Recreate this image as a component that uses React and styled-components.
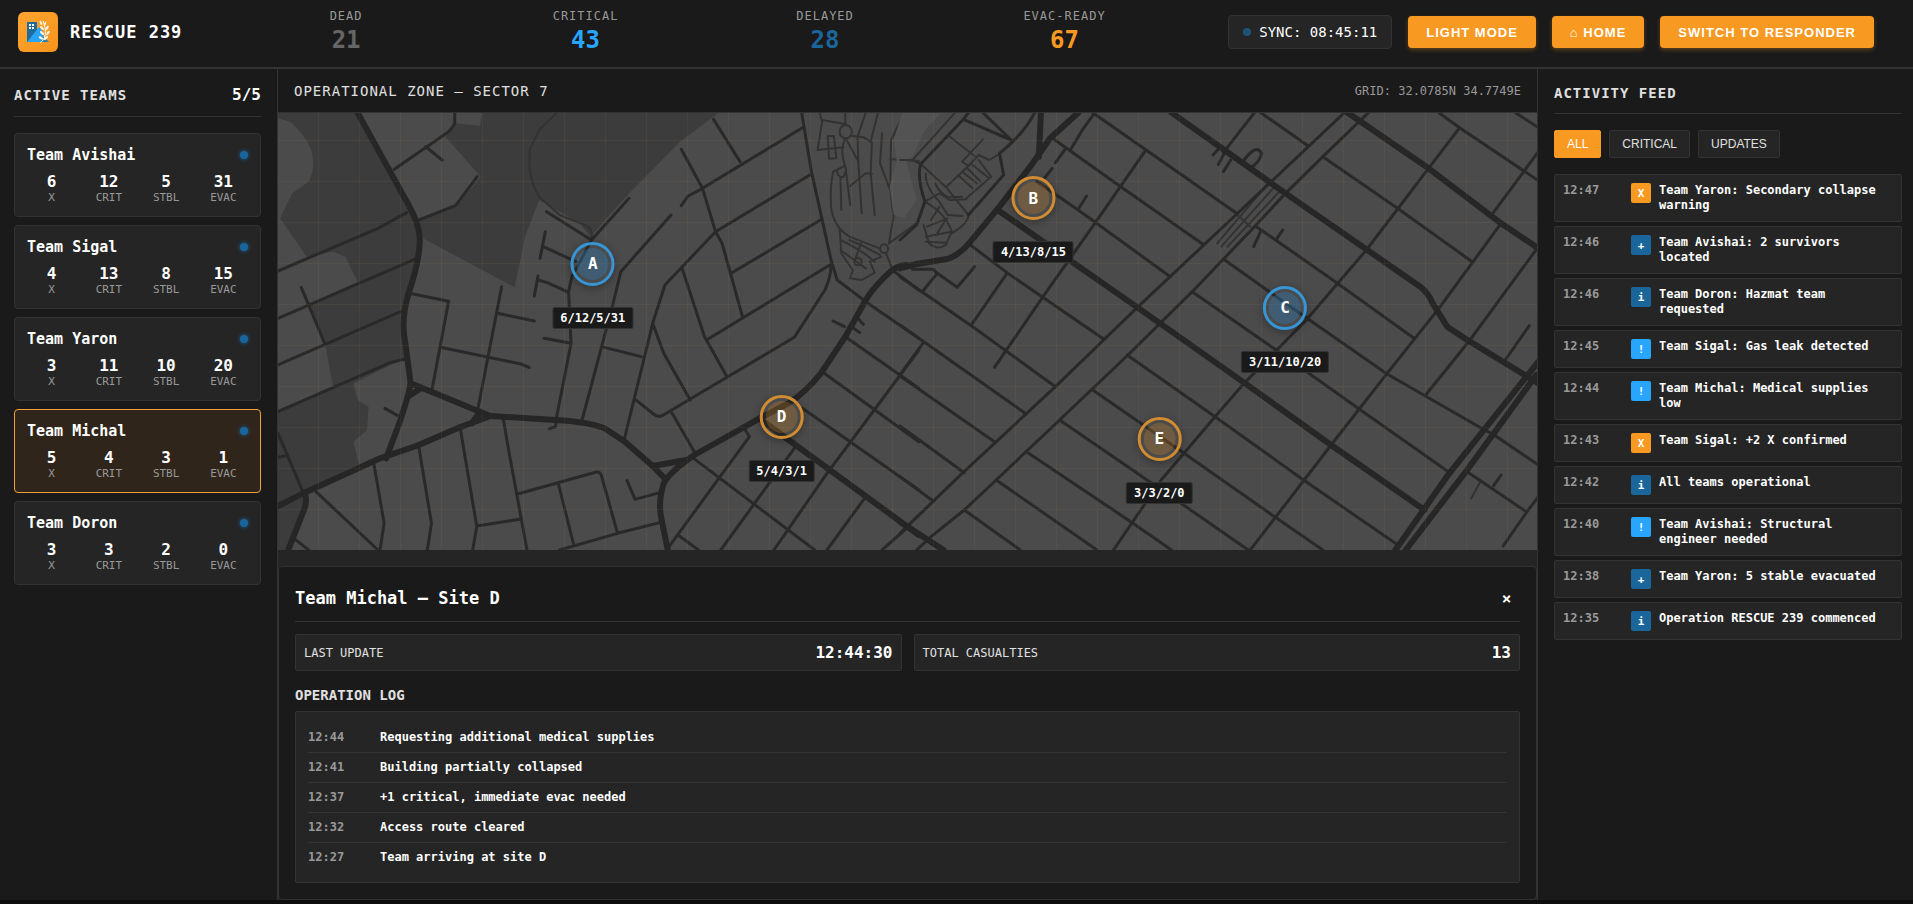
import React, { useState } from "react";
import styled, { createGlobalStyle, css } from "styled-components";

const c = {
  page: "#0d0d0d",
  panel: "#1a1a1a",
  card: "#252525",
  line: "#333333",
  text: "#ffffff",
  soft: "#e0e0e0",
  muted: "#999999",
  orange: "#f89921",
  blue: "#28a5fd",
  deep: "#1a6599",
};

const mono = '"DejaVu Sans Mono", "Liberation Mono", monospace';
const sans = '"Liberation Sans", Arial, sans-serif';

const GlobalStyle = createGlobalStyle`
  * { box-sizing: border-box; }
  body {
    margin: 0;
    background: ${c.page};
    color: ${c.text};
    font-family: ${mono};
  }
  h1, h2, h3, p, ul, ol, dl, dd { margin: 0; padding: 0; }
  ul, ol { list-style: none; }
`;

const Page = styled.div`
  display: flex;
  flex-direction: column;
  min-height: calc(100vh - 4px);
  background: ${c.panel};
`;

/* ---------- header ---------- */

const Header = styled.header`
  display: flex;
  align-items: center;
  height: 69px;
  padding: 0 39px 3px 18px;
  border-bottom: 2px solid ${c.line};
`;

const Brand = styled.div`
  display: flex;
  align-items: center;
  gap: 12px;
`;

const Logo = styled.div`
  display: grid;
  place-items: center;
  width: 40px;
  height: 40px;
  border-radius: 6px;
  background: linear-gradient(135deg, #ffa530, #f6931c);
`;

const Title = styled.h1`
  font-size: 17px;
  line-height: 20px;
  letter-spacing: 1px;
  white-space: nowrap;
`;

const Totals = styled.dl`
  flex: 1;
  display: grid;
  grid-template-columns: repeat(4, 1fr);
  margin: 0 44px;
  text-align: center;
`;

const TotalLabel = styled.dt`
  color: ${c.muted};
  font-size: 12px;
  line-height: 16px;
  letter-spacing: 1px;
`;

const TotalValue = styled.dd`
  color: ${(p) => p.$color};
  font-size: 24px;
  font-weight: 700;
  line-height: 32px;
`;

const Actions = styled.div`
  display: flex;
  align-items: center;
  gap: 16px;
`;

const Sync = styled.div`
  display: flex;
  align-items: center;
  gap: 8px;
  height: 34px;
  padding: 0 14px;
  border: 1px solid ${c.line};
  border-radius: 4px;
  background: ${c.card};
  font-size: 14px;
  white-space: nowrap;
`;

const Dot = styled.span`
  width: 8px;
  height: 8px;
  border-radius: 50%;
  background: ${c.deep};
  ${(p) => (p.$dim ? "opacity: 0.7;" : `box-shadow: 0 0 4px ${c.deep};`)}
`;

const ActionButton = styled.button`
  height: 32px;
  padding: 0 18px;
  border: 0;
  border-radius: 4px;
  background: ${c.orange};
  box-shadow: 0 2px 4px rgba(248, 153, 33, 0.3);
  color: ${c.text};
  font: 700 13px ${sans};
  letter-spacing: 1px;
  white-space: nowrap;
  cursor: pointer;
`;

/* ---------- columns ---------- */

const Columns = styled.main`
  flex: 1;
  display: grid;
  grid-template-columns: 278px minmax(0, 1fr) 376px;
`;

const TeamsPanel = styled.aside`
  padding: 16px 16px 16px 14px;
  border-right: 1px solid ${c.line};
`;

const PanelHead = styled.div`
  display: flex;
  align-items: center;
  justify-content: space-between;
  padding-bottom: ${(p) => (p.$compact ? 12 : 11)}px;
  margin-bottom: 16px;
  border-bottom: 1px solid ${c.line};
`;

const PanelTitle = styled.h2`
  color: ${c.soft};
  font-size: 14px;
  line-height: 16px;
  letter-spacing: 1px;
`;

const TeamCount = styled.span`
  font-size: 16px;
  font-weight: 700;
  line-height: 20px;
`;

const TeamList = styled.ul`
  display: flex;
  flex-direction: column;
  gap: 8px;
`;

const TeamCard = styled.button`
  display: block;
  width: 100%;
  padding: 12px;
  border: 1px solid ${(p) => (p.$active ? "#f0a040" : c.line)};
  border-radius: 4px;
  background: ${(p) => (p.$active ? "#30251b" : c.card)};
  color: ${c.text};
  font-family: ${mono};
  text-align: left;
  cursor: pointer;
`;

const TeamTop = styled.span`
  display: flex;
  align-items: center;
  justify-content: space-between;
  margin-bottom: 8px;
  font-size: 15px;
  font-weight: 700;
  line-height: 18px;
`;

const TeamStats = styled.span`
  display: grid;
  grid-template-columns: repeat(4, 1fr);
  gap: 8px;
  text-align: center;
`;

const TeamStat = styled.span`
  display: flex;
  flex-direction: column;
`;

const StatNumber = styled.span`
  font-size: 16px;
  font-weight: 700;
  line-height: 20px;
`;

const StatLabel = styled.span`
  color: ${c.muted};
  font-size: 11px;
  line-height: 12px;
`;

/* ---------- map ---------- */

const Centre = styled.section`
  display: flex;
  flex-direction: column;
  background: ${c.card};
`;

const ZoneHead = styled.div`
  display: flex;
  align-items: center;
  justify-content: space-between;
  height: 44px;
  padding: 0 16px;
  border-bottom: 1px solid ${c.line};
  background: ${c.panel};
`;

const ZoneTitle = styled.h2`
  color: ${c.soft};
  font-size: 14px;
  font-weight: 400;
  letter-spacing: 1px;
`;

const Coordinates = styled.span`
  color: ${c.muted};
  font-size: 12px;
`;

const MapArea = styled.div`
  position: relative;
  flex: 1;
  min-height: 400px;
  margin-bottom: 16px;
  overflow: hidden;
  background: #4b4b4b;

  > svg {
    position: absolute;
    inset: 0;
    width: 100%;
    height: 100%;
  }

  &::after {
    content: "";
    position: absolute;
    inset: 0;
    background-image:
      repeating-linear-gradient(0deg, transparent 0 40px, rgba(248, 190, 120, 0.05) 40px 41px),
      repeating-linear-gradient(90deg, transparent 0 40px, rgba(248, 190, 120, 0.05) 40px 41px);
    pointer-events: none;
  }
`;

const Site = styled.div`
  position: absolute;
  z-index: 1;
  left: ${(p) => p.$x}%;
  top: ${(p) => p.$y}%;
  display: flex;
  flex-direction: column;
  align-items: center;
  gap: 21px;
  transform: translate(-50%, -24px);
`;

const SiteRing = styled.button`
  width: 44px;
  height: 44px;
  padding: 3px;
  border: 3px solid ${(p) => (p.$blue ? "#3695d6" : "#d18c31")};
  border-radius: 50%;
  background-color: ${(p) => (p.$blue ? "rgba(40, 140, 210, 0.12)" : "rgba(248, 153, 33, 0.06)")};
  background-image: linear-gradient(
    ${(p) => (p.$blue ? "rgba(40, 130, 200, 0.22), rgba(40, 130, 200, 0.22)" : "rgba(248, 153, 33, 0.16), rgba(248, 153, 33, 0.16)")}
  );
  background-clip: content-box, padding-box;
  background-origin: content-box;
  box-shadow: 0 2px 8px rgba(0, 0, 0, 0.35);
  color: ${c.text};
  font: 700 16px ${mono};
  cursor: pointer;
`;

const SiteLabel = styled.span`
  padding: 0 7px;
  border: 1px solid ${c.line};
  border-radius: 2px;
  background: ${c.panel};
  font-size: 12px;
  font-weight: 700;
  line-height: 20px;
  white-space: nowrap;
`;

/* ---------- team detail ---------- */

const Detail = styled.section`
  padding: 16px;
  border: 1px solid ${c.line};
  border-radius: 4px;
  background: ${c.panel};
`;

const DetailHead = styled.div`
  display: flex;
  align-items: center;
  justify-content: space-between;
  padding-bottom: 8px;
  margin-bottom: 12px;
  border-bottom: 1px solid ${c.line};
`;

const DetailTitle = styled.h2`
  font-size: 17px;
  line-height: 30px;
`;

const CloseButton = styled.button`
  width: 27px;
  height: 30px;
  padding: 0;
  border: 0;
  background: none;
  color: ${c.text};
  font: 700 16px ${mono};
  cursor: pointer;
`;

const Facts = styled.dl`
  display: grid;
  grid-template-columns: 1fr 1fr;
  gap: 12px;
  margin-bottom: 16px;
`;

const Fact = styled.div`
  display: flex;
  align-items: center;
  justify-content: space-between;
  height: 37px;
  padding: 0 8px;
  border: 1px solid ${c.line};
  border-radius: 2px;
  background: ${c.card};

  dt { color: ${c.soft}; font-size: 12px; }
  dd { font-size: 16px; font-weight: 700; }
`;

const LogTitle = styled.h3`
  margin-bottom: 8px;
  color: ${c.soft};
  font-size: 14px;
  line-height: 16px;
`;

const Log = styled.ol`
  padding: 11px 12px 9px;
  border: 1px solid ${c.line};
  border-radius: 2px;
  background: ${c.card};
`;

const LogRow = styled.li`
  display: grid;
  grid-template-columns: 60px 1fr;
  gap: 12px;
  height: 30px;
  border-bottom: 1px solid ${c.line};
  font-size: 12px;
  font-weight: 700;
  line-height: 29px;

  &:last-child { border-bottom: 0; }
`;

const Time = styled.time`
  color: ${c.muted};
  font-weight: 700;
`;

/* ---------- activity feed ---------- */

const FeedPanel = styled.aside`
  padding: 16px 11px 16px 16px;
  border-left: 1px solid ${c.line};
`;

const Filters = styled.div`
  display: flex;
  gap: 8px;
  margin-bottom: 16px;
`;

const FilterButton = styled.button`
  height: 28px;
  padding: 0 12px;
  border: 1px solid ${c.line};
  border-radius: 2px;
  background: ${c.card};
  color: ${c.soft};
  font: 400 12px ${sans};
  cursor: pointer;
  ${(p) =>
    p.$active &&
    css`
      border-color: ${c.orange};
      background: ${c.orange};
      color: ${c.text};
    `}
`;

const FeedList = styled.ul`
  display: flex;
  flex-direction: column;
  gap: 4px;
`;

const FeedItem = styled.li`
  display: grid;
  grid-template-columns: 60px 20px 1fr;
  gap: 8px;
  padding: 8px;
  border: 1px solid ${c.line};
  border-radius: 2px;
  background: ${c.card};
  font-size: 12px;
  font-weight: 700;
  line-height: 15px;
`;

const Badge = styled.span`
  width: 20px;
  height: 20px;
  border-radius: 2px;
  background: ${(p) => p.$color};
  font-size: 11px;
  line-height: 21px;
  text-align: center;
`;

/* ---------- data ---------- */

const totals = [
  ["DEAD", 21, "#666666"],
  ["CRITICAL", 43, c.blue],
  ["DELAYED", 28, c.deep],
  ["EVAC-READY", 67, c.orange],
];

const teams = [
  ["Team Avishai", [6, 12, 5, 31]],
  ["Team Sigal", [4, 13, 8, 15]],
  ["Team Yaron", [3, 11, 10, 20]],
  ["Team Michal", [5, 4, 3, 1]],
  ["Team Doron", [3, 3, 2, 0]],
];

const statNames = ["X", "CRIT", "STBL", "EVAC"];

const sites = [
  ["A", 25, 35, "6/12/5/31", true],
  ["B", 60, 20, "4/13/8/15", false],
  ["C", 80, 45, "3/11/10/20", true],
  ["D", 40, 70, "5/4/3/1", false],
  ["E", 70, 75, "3/3/2/0", false],
];

const log = [
  ["12:44", "Requesting additional medical supplies"],
  ["12:41", "Building partially collapsed"],
  ["12:37", "+1 critical, immediate evac needed"],
  ["12:32", "Access route cleared"],
  ["12:27", "Team arriving at site D"],
];

const badgeColors = { X: c.orange, "+": c.deep, i: c.deep, "!": c.blue };

const feed = [
  ["12:47", "X", "Team Yaron: Secondary collapse warning"],
  ["12:46", "+", "Team Avishai: 2 survivors located"],
  ["12:46", "i", "Team Doron: Hazmat team requested"],
  ["12:45", "!", "Team Sigal: Gas leak detected"],
  ["12:44", "!", "Team Michal: Medical supplies low"],
  ["12:43", "X", "Team Sigal: +2 X confirmed"],
  ["12:42", "i", "All teams operational"],
  ["12:40", "!", "Team Avishai: Structural engineer needed"],
  ["12:38", "+", "Team Yaron: 5 stable evacuated"],
  ["12:35", "i", "Operation RESCUE 239 commenced"],
];

const west = {
  dark: [
    "M0,158 L195,158 L340,470 L350,535 L340,600 L305,750 L310,895 L185,970 L195,1020 L222,1040 L218,1110 L185,1145 L198,1212 L62,1295 L70,1330 L25,1470 L0,1470 L0,1050 L135,980 L115,850 L75,735 L195,665 L165,590 L135,575 L70,590 L5,475 L35,400 L75,365 Q90,330 85,290 Q80,240 30,185 L0,175Z",
    "M500,158 L1080,158 L985,245 L860,400 L765,530 L740,490 L640,420 L605,530 L580,682 L355,535 L345,480 L435,440 L497,350 L410,230 L435,190 L495,197Z",
  ],
  major: [
    "M195,158 L250,280 L320,435 Q350,500 347,550 Q345,610 320,700 Q300,780 312,850 L325,970 L318,1010 L300,1080 L265,1195",
    "M0,1338 L65,1298 L250,1195 L345,1155 L445,1102 L520,1068",
    "M325,970 L520,1068 L680,1080 Q760,1085 800,1105 L850,1145 L918,1218 L1000,1200",
    "M1540,615 Q1520,615 1500,635 Q1460,680 1440,720 L1390,830 L1330,940 Q1290,1000 1250,1030 L1180,1075 L1020,1185 Q960,1235 945,1270 Q930,1330 940,1380 L955,1470",
    "M918,1218 L950,1258 M350,985 L318,1010 M495,1055 L475,1090 M65,1298 Q72,1320 65,1345 L25,1470",
    "M1190,1085 L1570,1425",
  ],
  minor: [
    "M433,158 L433,190 Q425,210 410,222 L285,328 M362,260 L402,300 M345,480 L435,437 L488,350",
    "M0,633 L245,505 L315,458 M0,775 L340,595 M0,915 L300,755 M0,1055 L275,908 L310,898 M57,682 L115,852",
    "M322,700 L418,724 L378,985 M398,862 L595,912 L615,922 M548,680 L490,1045 M538,760 L628,783",
    "M658,455 L768,540 L860,415 M768,540 L720,650 L712,695 L718,850 L682,1075 L680,1100 L665,1106 M655,515 L642,595 M650,560 L730,605 M637,648 L628,708 M637,660 L660,668 L712,697 M652,835 L718,850",
    "M963,465 L840,635 L820,735 L745,1080 M792,860 L890,890",
    "M1067,178 L1132,305 M988,268 L1040,385 L1072,515 L1088,550 L1138,770 M988,437 L1005,408 L1040,385",
    "M1285,203 L1040,385 M1307,342 L1072,515 L948,675 L918,790 L848,1140 M1332,478 L1110,640 M1355,613 L1050,840 M990,625 L1045,830 L1100,950 M1283,158 L1307,335 L1355,600 L1370,660 L1440,725 L1570,835",
    "M1355,615 Q1355,650 1340,690 L1265,832 L940,1068 Q930,1072 920,1062 L875,1018 M918,790 L945,880 L1010,1020 M965,1058 L1020,1175",
    "M1507,632 L1570,690 M1390,830 L1570,985 M1335,937 L1570,1145 M1285,1045 L1570,1290 M1570,870 L1400,1150 L1345,1240 L1215,1470 M1440,1310 L1345,1470 M1540,1405 L1480,1470 M1268,1160 L1085,1470",
    "M1015,1192 L1315,1470 M1145,1110 L1155,1130 L1080,1255 L955,1465 M980,1425 L1030,1470",
    "M93,1295 L245,1470 M235,1212 L260,1390 L250,1470 M345,1160 L376,1390 L366,1470 M447,1108 L487,1400 L477,1470 M552,1078 L568,1190 L610,1470 M487,1398 L592,1378",
    "M587,1302 L780,1236 Q788,1234 792,1245 L832,1420 M687,1272 L724,1452 M690,1470 L832,1420 L935,1388 M855,1262 L875,1318 L935,1298",
    "M0,1120 L62,1298 M0,1192 L20,1187 M262,1045 L292,1066 M42,1438 L75,1470 M1360,783 L1388,800 M1405,800 L1425,818 M1420,775 L1434,793",
  ],
  lane: [
    "M683,158 L640,210 L618,265 Q608,350 640,410 L690,465 L755,497 Q772,510 768,530",
    "M1327,158 L1333,185 L1322,270 L1385,262 M1333,180 L1390,192 L1390,158 M1347,228 L1362,228 L1368,295 L1350,296 Z",
    "M1376,215 a15,20 0 1,0 30,0 a15,20 0 1,0 -30,0 M1390,235 Q1375,270 1390,320 L1402,435 M1406,228 L1435,232 L1455,248 L1452,340 L1462,465 M1470,158 L1452,245 M1440,158 L1420,230 L1422,310 L1430,460 M1420,300 L1392,238 M1535,158 L1502,240 L1500,385 L1508,470 L1497,550 M1480,220 L1475,310 L1498,385",
    "M1388,318 L1360,335 Q1352,380 1355,440 Q1360,500 1400,530 L1475,566 M1370,330 Q1368,350 1385,352 L1392,330 M1378,352 L1380,450 M1402,378 L1440,340 L1455,342",
    "M1475,566 a10,13 0 1,0 20,0 a10,13 0 1,0 -20,0 M1497,550 L1570,485 M1490,580 L1505,628",
    "M1376,505 L1380,580 L1408,630 L1402,655 L1430,660 L1462,638 L1450,605 L1478,590 M1378,540 Q1430,570 1462,605 M1378,570 L1440,625 M1428,550 L1412,605 M1412,605 a9,11 0 1,0 18,0 a9,11 0 1,0 -18,0 M1400,540 Q1440,560 1475,585 M1500,297 L1570,303",
  ],
};

const east = {
  light: ["M5,158 L100,158 L60,210 L30,290 L15,300 L40,420 L10,475 L-15,465 L-25,380 L-8,300 L-15,240Z"],
  major: [
    "M340,158 L335,290 M430,158 L362,235 L320,310 L240,440 L170,545 Q140,590 110,598 L40,612 L0,625",
    "M655,158 L930,400 L1255,680 Q1275,700 1285,730 L1320,800 L1375,845 L1540,970",
    "M1080,158 L1275,325 L1450,490 L1540,565",
    "M238,452 L570,740 L830,968 L1040,1155 L1265,1350",
    "M0,1385 L105,1470",
    "M1540,905 L1508,955 L1325,1240 L1195,1470 M1535,945 L1365,1235 L1220,1470",
  ],
  minor: [
    "M470,158 L440,210 L412,268 M397,270 L375,308 M367,325 L345,360 M450,408 L430,448",
    "M368,235 L530,378 L730,552 M592,272 L470,490 L345,710 L228,922 M465,158 L812,460 M330,365 L430,450 L652,650",
    "M855,158 L780,278 M870,158 L985,258 M1072,158 L810,465 L570,745 L375,980 L150,1240 L0,1420",
    "M1130,158 L1020,290 L930,400 L855,500 L705,695 L550,885 L385,1080 L232,1260 L155,1350 L75,1430 L40,1470",
    "M1300,158 L1350,203 L1540,362 M1485,158 L1540,203 M1350,203 L1275,325 L1125,570 L980,780 L830,970 L760,1070 L630,1260 L515,1470",
    "M1020,290 L1200,445 L1380,605 M1540,275 L1430,460 M1450,490 L1300,745 L1175,940 L1040,1155 L845,1470 M1540,560 L1375,840 L1268,1005",
    "M860,500 L1050,665 L1240,835 M780,597 L930,730 L1175,942 L1410,1110 L1430,1122 L1540,1215 M705,695 L905,868 L1105,1045 L1328,1240",
    "M548,885 L760,1070 L970,1257 L1195,1450 M465,990 L680,1175 L900,1367 L1020,1470 M385,1080 L655,1310 L840,1470 M305,1175 L560,1388 L655,1470 M232,1260 L475,1470 M155,1350 L290,1470",
    "M170,555 L258,638 L492,838 M258,640 L172,795 M0,650 L172,797 L375,980 M0,795 L300,1058 M55,850 L0,945 M0,948 L228,1145 M0,1098 L155,1238 M0,1250 L80,1323",
    "M1368,1235 L1512,1356 L1455,1458 M1512,1356 L1540,1310 M1450,1245 L1432,1277 M1518,797 L1460,900",
    "M770,265 L755,285 M782,280 L768,313 M798,300 L780,335 M923,510 L907,540 M870,515 L853,560",
    "M30,628 L80,628 L90,640 L138,682 L180,620 M90,640 L57,690 M830,300 Q860,250 872,280 Q870,300 852,318",
    "M153,178 L268,240 M200,158 L268,240 M153,178 L50,312 Q40,350 60,425 L40,495 L0,540 M325,158 Q300,220 240,280 L250,345 L165,465 M165,158 L153,178",
  ],
  lane: [
    "M133,158 L30,300 L50,312 L110,380 L165,465 Q165,490 125,520 M60,425 Q110,460 125,515 L110,555 Q90,572 70,550 L57,495 M0,300 L30,300",
    "M118,228 L180,288 M200,238 L150,305 L165,318 L112,380 M165,318 L190,285 L215,300 L240,282 M190,300 L220,350 M140,345 L175,385 M150,335 L185,370 M162,325 L195,365 M175,315 L215,355 M220,350 L160,415",
    "M62,340 Q60,380 95,425 L115,465 L150,468 M60,425 L95,400 L120,420 L160,418 M85,370 Q95,400 118,412 L150,410 M65,500 L115,475 M62,530 L125,515 M75,480 L95,440 M90,520 L110,480 M62,545 L110,548",
    "M885,375 L765,550 M900,385 L775,560 M915,395 L790,560 M812,462 L845,500 M1400,1265 L1378,1315",
  ],
};

const Streets = styled.g`
  fill: none;
  stroke: ${(p) => p.$color};
  stroke-width: ${(p) => p.$w}px;
  stroke-linecap: round;
  stroke-linejoin: round;

  path { vector-effect: non-scaling-stroke; }
`;

function MapHalf({ data, transform }) {
  return (
    <g transform={transform}>
      {(data.dark || []).map((d) => <path key={d} d={d} fill="#3c3c3c" />)}
      {(data.light || []).map((d) => <path key={d} d={d} fill="#535353" />)}
      <Streets $w={2} $color="#323232">{data.lane.map((d) => <path key={d} d={d} />)}</Streets>
      <Streets $w={3} $color="#292929">{data.minor.map((d) => <path key={d} d={d} />)}</Streets>
      <Streets $w={6} $color="#262626">{data.major.map((d) => <path key={d} d={d} />)}</Streets>
    </g>
  );
}

function StreetMap() {
  return (
    <svg viewBox="0 0 1259 437" preserveAspectRatio="xMidYMid slice" aria-hidden="true">
      <MapHalf data={west} transform="matrix(0.40816 0 0 0.33333 0 -53)" />
      <MapHalf data={east} transform="matrix(0.41454 0 0 0.33333 622 -53)" />
    </svg>
  );
}

function LogoMark() {
  return (
    <svg width="26" height="26" viewBox="0 0 26 26" aria-hidden="true">
      <path d="M2 3h10v20H2z" fill="#1f6b9c" />
      <path d="M2 23 14 8l4 5v10z" fill="#29a5f5" />
      <path d="M18 17 24 23H16z" fill="#2b7fa6" />
      <path d="M4 5h2v2H4zM7 5h2v2H7zM4 8h2v2H4zM7 8h2v2H7z" fill="#fff" />
      <path d="M15 24c6-4 7-12 3-22" fill="none" stroke="#fff" strokeWidth="1" />
      <g fill="#fff3e2">
        <ellipse cx="16" cy="4" rx="1" ry="2.4" transform="rotate(-25 16 4)" />
        <ellipse cx="20" cy="5" rx="1" ry="2.4" transform="rotate(20 20 5)" />
        <ellipse cx="17" cy="9" rx="1.2" ry="2.6" transform="rotate(-45 17 9)" />
        <ellipse cx="22" cy="9" rx="1.2" ry="2.6" transform="rotate(35 22 9)" />
        <ellipse cx="17" cy="14" rx="1.2" ry="2.6" transform="rotate(-50 17 14)" />
        <ellipse cx="23" cy="14" rx="1.2" ry="2.6" transform="rotate(40 23 14)" />
        <ellipse cx="16" cy="19" rx="1.2" ry="2.6" transform="rotate(-60 16 19)" />
        <ellipse cx="21" cy="19" rx="1.2" ry="2.6" transform="rotate(50 21 19)" />
      </g>
    </svg>
  );
}

export default function App() {
  const [active, setActive] = useState("Team Michal");
  const [filter, setFilter] = useState("ALL");

  return (
    <Page>
      <GlobalStyle />
      <Header>
        <Brand>
          <Logo><LogoMark /></Logo>
          <Title>RESCUE 239</Title>
        </Brand>
        <Totals>
          {totals.map(([label, value, color]) => (
            <div key={label}>
              <TotalLabel>{label}</TotalLabel>
              <TotalValue $color={color}>{value}</TotalValue>
            </div>
          ))}
        </Totals>
        <Actions>
          <Sync><Dot $dim />SYNC: 08:45:11</Sync>
          <ActionButton type="button">LIGHT MODE</ActionButton>
          <ActionButton type="button">⌂ HOME</ActionButton>
          <ActionButton type="button">SWITCH TO RESPONDER</ActionButton>
        </Actions>
      </Header>

      <Columns>
        <TeamsPanel>
          <PanelHead>
            <PanelTitle>ACTIVE TEAMS</PanelTitle>
            <TeamCount>5/5</TeamCount>
          </PanelHead>
          <TeamList>
            {teams.map(([name, stats]) => (
              <li key={name}>
                <TeamCard type="button" $active={name === active} onClick={() => setActive(name)}>
                  <TeamTop>{name}<Dot /></TeamTop>
                  <TeamStats>
                    {stats.map((n, i) => (
                      <TeamStat key={statNames[i]}>
                        <StatNumber>{n}</StatNumber>
                        <StatLabel>{statNames[i]}</StatLabel>
                      </TeamStat>
                    ))}
                  </TeamStats>
                </TeamCard>
              </li>
            ))}
          </TeamList>
        </TeamsPanel>

        <Centre>
          <ZoneHead>
            <ZoneTitle>OPERATIONAL ZONE – SECTOR 7</ZoneTitle>
            <Coordinates>GRID: 32.0785N 34.7749E</Coordinates>
          </ZoneHead>
          <MapArea>
            <StreetMap />
            {sites.map(([id, x, y, label, blue]) => (
              <Site key={id} $x={x} $y={y}>
                <SiteRing type="button" $blue={blue}>{id}</SiteRing>
                <SiteLabel>{label}</SiteLabel>
              </Site>
            ))}
          </MapArea>
          <Detail>
            <DetailHead>
              <DetailTitle>Team Michal – Site D</DetailTitle>
              <CloseButton type="button" aria-label="Close">×</CloseButton>
            </DetailHead>
            <Facts>
              <Fact><dt>LAST UPDATE</dt><dd>12:44:30</dd></Fact>
              <Fact><dt>TOTAL CASUALTIES</dt><dd>13</dd></Fact>
            </Facts>
            <LogTitle>OPERATION LOG</LogTitle>
            <Log>
              {log.map(([time, text]) => (
                <LogRow key={time}><Time>{time}</Time><span>{text}</span></LogRow>
              ))}
            </Log>
          </Detail>
        </Centre>

        <FeedPanel>
          <PanelHead $compact>
            <PanelTitle>ACTIVITY FEED</PanelTitle>
          </PanelHead>
          <Filters>
            {["ALL", "CRITICAL", "UPDATES"].map((f) => (
              <FilterButton key={f} type="button" $active={f === filter} onClick={() => setFilter(f)}>{f}</FilterButton>
            ))}
          </Filters>
          <FeedList>
            {feed.map(([time, mark, text]) => (
              <FeedItem key={time + text}>
                <Time>{time}</Time>
                <Badge $color={badgeColors[mark]}>{mark}</Badge>
                <span>{text}</span>
              </FeedItem>
            ))}
          </FeedList>
        </FeedPanel>
      </Columns>
    </Page>
  );
}
